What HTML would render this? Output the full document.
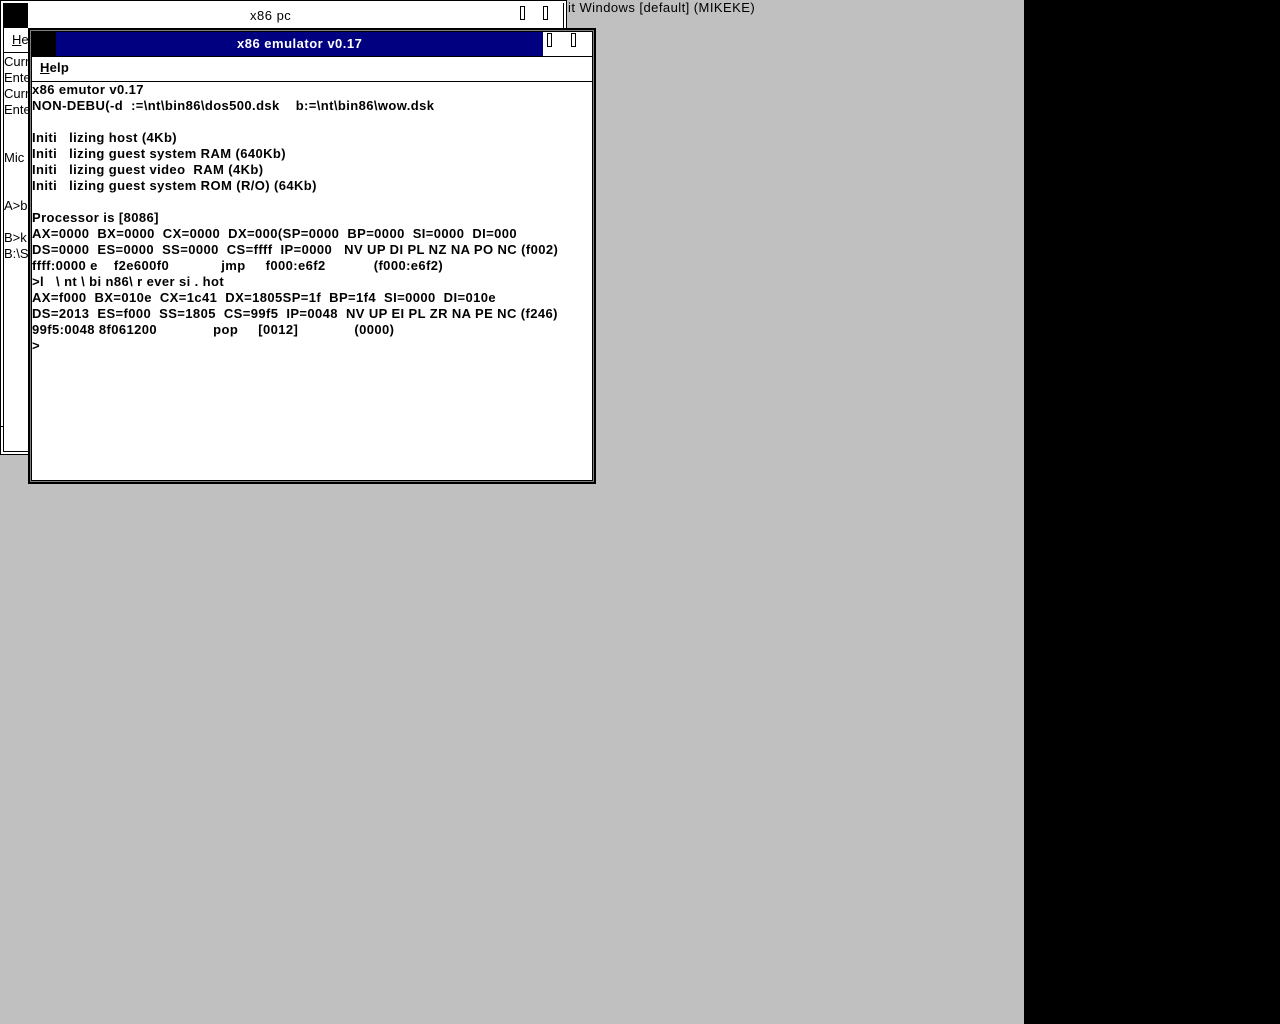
<!DOCTYPE html>
<html><head><style>
body{margin:0;width:1280px;height:1024px;background:#000;position:relative;overflow:hidden;font-family:"Liberation Sans",sans-serif;font-weight:bold;font-size:13px;color:#000}
.a{position:absolute}
.t{position:absolute;white-space:pre;line-height:16px}
</style></head><body>
<div class="a" style="left:0;top:0;width:1024px;height:1024px;background:#c0c0c0"></div>
<div class="t" style="left:568px;top:0px;font-weight:normal;letter-spacing:0.45px">it Windows [default] (MIKEKE)</div>
<!-- back window -->
<div class="a" style="left:0;top:0;width:565px;height:453px;background:#fff;border:1px solid #000"></div>
<div class="a" style="left:3px;top:3px;width:559px;height:448px;border:1px solid #000;border-top:none"></div>
<div class="a" style="left:3px;top:3px;width:25px;height:25px;background:#000"></div>
<div class="a" style="left:28px;top:28px;width:536px;height:1px;background:#000"></div>
<div class="t" style="left:250px;top:8px;font-weight:normal;letter-spacing:0.5px">x86 pc</div>
<div class="a" style="left:520px;top:6px;width:3px;height:12px;border:1px solid #000"></div>
<div class="a" style="left:543px;top:6px;width:3px;height:12px;border:1px solid #000"></div>
<div class="t" style="left:12px;top:32px;font-weight:normal"><u>H</u>e</div>
<div class="a" style="left:3px;top:52px;width:560px;height:1px;background:#000"></div>
<div class="t" style="left:4px;top:54px;font-weight:normal">Curr
Ente
Curr
Ente


Mic


A&gt;b

B&gt;k
B:\S</div>
<div class="a" style="left:0;top:426px;width:4px;height:1px;background:#000"></div>
<!-- front window -->
<div class="a" style="left:28px;top:28px;width:564px;height:452px;background:#808080;border:2px solid #000"></div>
<div class="a" style="left:32px;top:32px;width:560px;height:448px;background:#fff;outline:1px solid #000"></div>
<div class="a" style="left:32px;top:32px;width:24px;height:24px;background:#000"></div>
<div class="a" style="left:56px;top:32px;width:487px;height:24px;background:#000080"></div>
<div class="a" style="left:32px;top:56px;width:560px;height:1px;background:#000"></div>
<div class="t" style="left:237px;top:36px;color:#fff;font-weight:bold;letter-spacing:0.5px">x86 emulator v0.17</div>
<div class="a" style="left:547px;top:33px;width:3px;height:12px;border:1px solid #000"></div>
<div class="a" style="left:571px;top:33px;width:3px;height:12px;border:1px solid #000"></div>
<div class="t" style="left:40px;top:60px;font-weight:bold;letter-spacing:0.2px"><u>H</u>elp</div>
<div class="a" style="left:32px;top:81px;width:560px;height:1px;background:#000"></div>
<div class="t" style="left:32px;top:82px;font-weight:bold;letter-spacing:0.4px">x86 emutor v0.17
NON-DEBU(-d  :=\nt\bin86\dos500.dsk    b:=\nt\bin86\wow.dsk

Initi   lizing host (4Kb)
Initi   lizing guest system RAM (640Kb)
Initi   lizing guest video  RAM (4Kb)
Initi   lizing guest system ROM (R/O) (64Kb)

Processor is [8086]
AX=0000  BX=0000  CX=0000  DX=000(SP=0000  BP=0000  SI=0000  DI=000
DS=0000  ES=0000  SS=0000  CS=ffff  IP=0000   NV UP DI PL NZ NA PO NC (f002)
ffff:0000 e    f2e600f0             jmp     f000:e6f2            (f000:e6f2)
&gt;l   \ nt \ bi n86\ r ever si . hot
AX=f000  BX=010e  CX=1c41  DX=1805SP=1f  BP=1f4  SI=0000  DI=010e
DS=2013  ES=f000  SS=1805  CS=99f5  IP=0048  NV UP EI PL ZR NA PE NC (f246)
99f5:0048 8f061200              pop     [0012]              (0000)
&gt;</div>
</body></html>
